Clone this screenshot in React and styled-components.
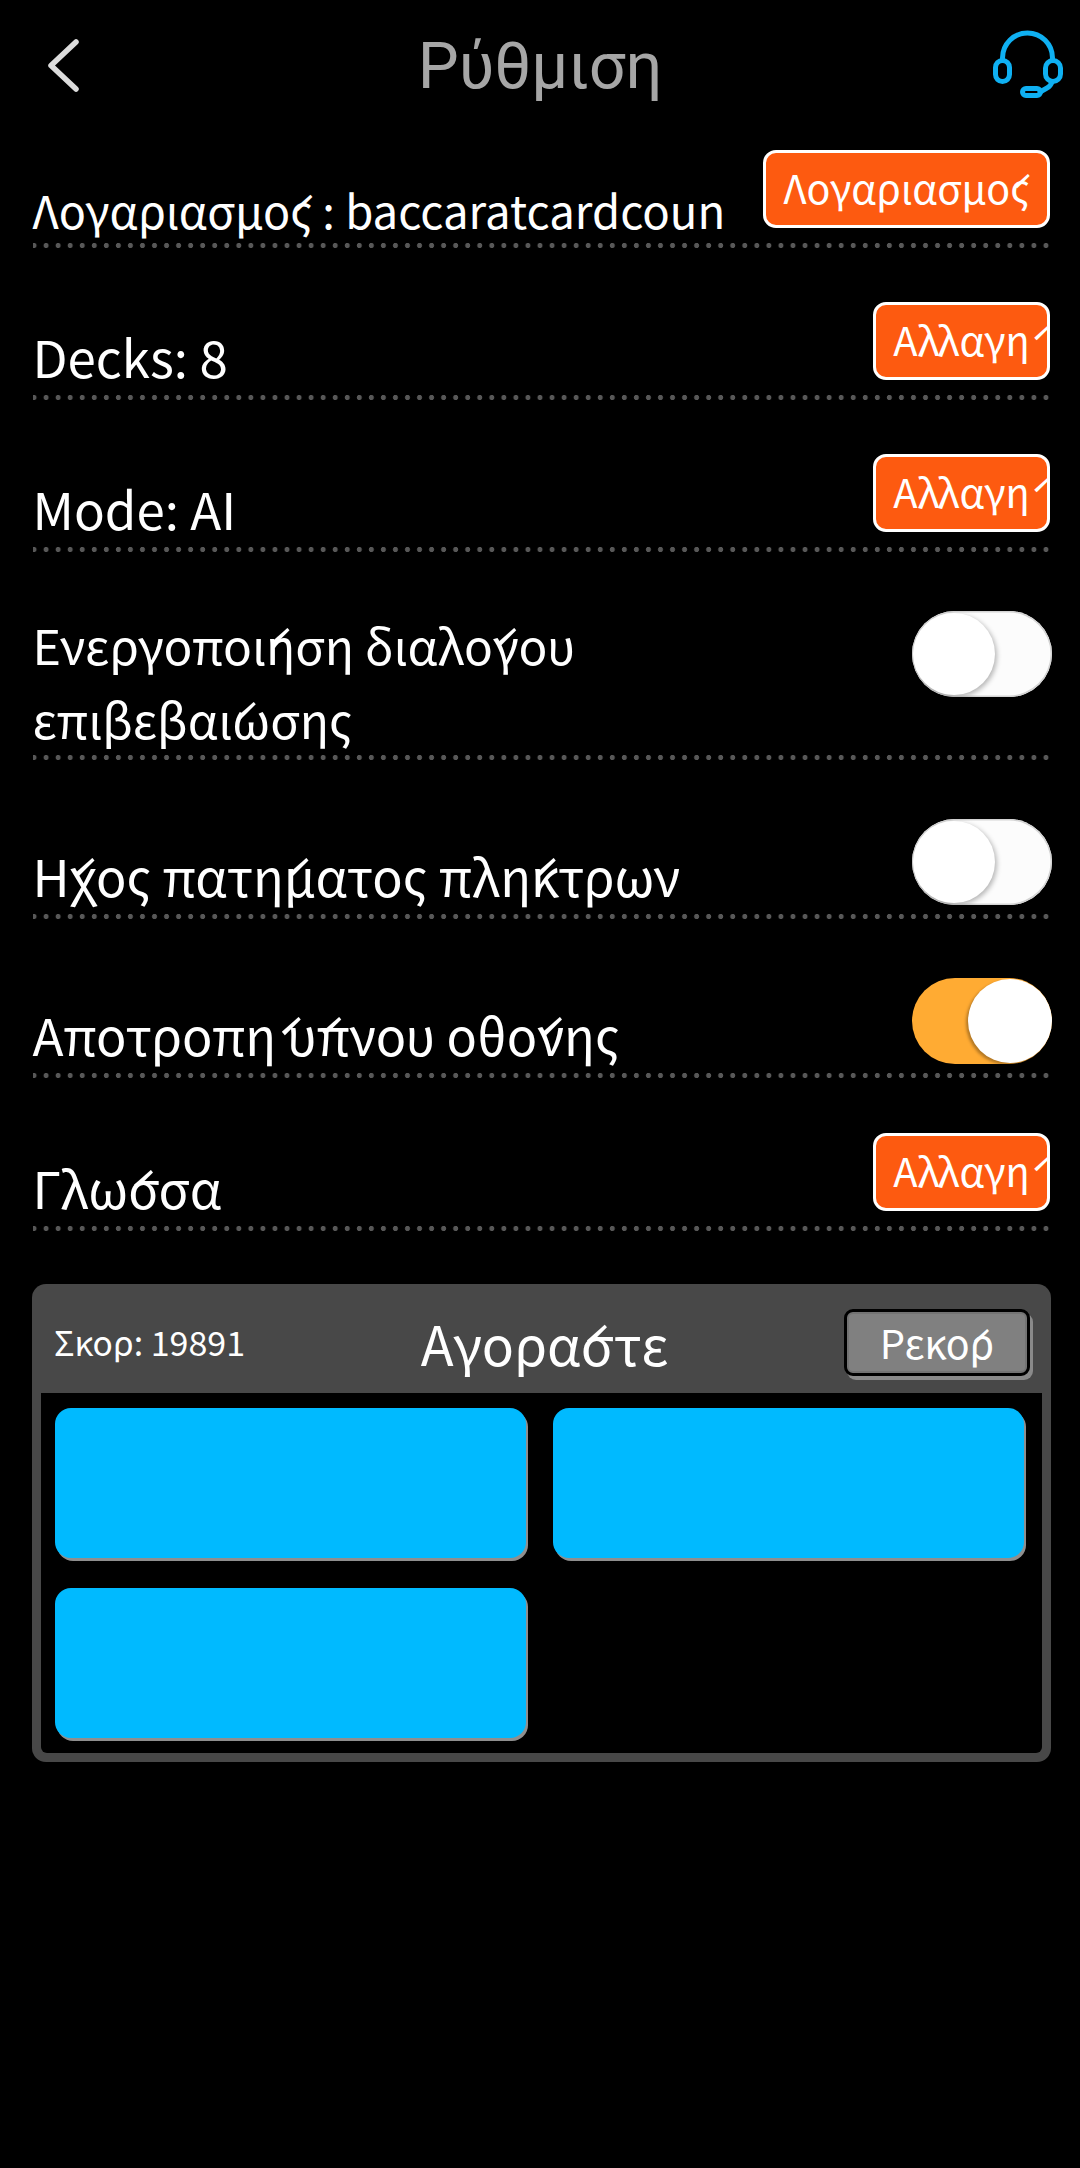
import React from 'react'
import styled, { createGlobalStyle, css } from 'styled-components'

const GlobalStyle = createGlobalStyle`
  html, body {
    margin: 0;
    background: #000;
  }
  body {
    font-family: "Noto Sans CJK SC", "Noto Sans", sans-serif;
    color: #fff;
  }
`

// accents are kept decomposed, the reference draws them apart from their letter
const rows = [
  { id: 'account', height: 151, label: 'Λογαριασμο\u0301ς : baccaratcardcoun', button: 'Λογαριασμο\u0301ς', size: 'small', wide: true },
  { id: 'decks', height: 152, label: 'Decks: 8', button: 'Αλλαγη\u0301' },
  { id: 'mode', height: 152, label: 'Mode: AI', button: 'Αλλαγη\u0301' },
  { id: 'confirm', height: 208, label: 'Ενεργοποι\u0301ηση διαλο\u0301γου επιβεβαι\u0301ωσης', toggle: 'off', size: 'tall' },
  { id: 'sound', height: 159, label: 'Η\u0301χος πατη\u0301ματος πλη\u0301κτρων', toggle: 'off' },
  { id: 'sleep', height: 159, label: 'Αποτροπη\u0301 υ\u0301πνου οθο\u0301νης', toggle: 'on' },
  { id: 'lang', height: 153, label: 'Γλω\u0301σσα', button: 'Αλλαγη\u0301' },
]

const labelSizes = { small: 45.5, tall: 48.4 }

const HeadsetIcon = () => (
  <svg width="76" height="72" viewBox="0 0 76 72" fill="none" stroke="#0fb0f2" strokeWidth="5" strokeLinecap="round" strokeLinejoin="round">
    <path d="M12.5 32v-2a25 25 0 0 1 50 0v2" />
    <rect x="5.5" y="32.5" width="14" height="21" rx="7" />
    <rect x="55.5" y="32.5" width="15" height="21" rx="7.5" />
    <path d="M62 54c-1 3-3 5-5 6l-7 4" />
    <rect x="32.5" y="60.5" width="18" height="7" rx="3.5" />
  </svg>
)

const BackIcon = () => (
  <svg width="36" height="53" viewBox="0 0 36 53" fill="none" stroke="#dcdcdc" strokeWidth="5.5" strokeLinecap="round" strokeLinejoin="round">
    <path d="M30 3L5 26.5 30 50" />
  </svg>
)

export default function App() {
  return (
    <Styles.Page>
      <GlobalStyle />
      <Styles.Header>
        <Styles.Back><BackIcon /></Styles.Back>
        <Styles.Title>Ρύθμιση</Styles.Title>
        <Styles.Help><HeadsetIcon /></Styles.Help>
      </Styles.Header>
      <Styles.List>
        {rows.map((r) => (
          <Styles.Row key={r.id} $height={r.height}>
            <Styles.Label $size={r.size}>{r.label}</Styles.Label>
            {r.button && <Styles.Action $wide={r.wide}>{r.button}</Styles.Action>}
            {r.toggle && (
              <Styles.Toggle $on={r.toggle === 'on'} $tall={r.size === 'tall'}>
                <Styles.Knob $on={r.toggle === 'on'} />
              </Styles.Toggle>
            )}
          </Styles.Row>
        ))}
      </Styles.List>
      <Styles.Shop>
        <Styles.ShopHead>
          <Styles.Score>Σκορ: 19891</Styles.Score>
          <Styles.ShopTitle>{'Αγορα\u0301στε'}</Styles.ShopTitle>
          <Styles.Record>{'Ρεκο\u0301ρ'}</Styles.Record>
        </Styles.ShopHead>
        <Styles.ShopBody>
          <Styles.Tile />
          <Styles.Tile />
          <Styles.Tile />
        </Styles.ShopBody>
      </Styles.Shop>
    </Styles.Page>
  )
}

const Styles = {
  Page: styled.main`
    width: 1080px;
    height: 2168px;
    background: #000;
    overflow: hidden;
  `,
  Header: styled.header`
    height: 97px;
    display: grid;
    grid-template-columns: 1fr auto 1fr;
    align-items: start;
    padding: 0 14px;
    box-sizing: border-box;
  `,
  Back: styled.div`
    display: flex;
    padding: 39px 0 0 32px;
  `,
  Help: styled.div`
    display: flex;
    justify-content: flex-end;
    padding-top: 28px;
  `,
  Title: styled.h1`
    margin: 0;
    padding-top: 30px;
    font-family: Roboto, sans-serif;
    font-size: 65px;
    font-weight: 400;
    line-height: 72px;
    color: #a6a6a6;
  `,
  List: styled.div`
    margin: 0 30px 0 33px;
  `,
  Row: styled.div`
    height: ${(p) => p.$height}px;
    box-sizing: border-box;
    display: flex;
    align-items: flex-end;
    justify-content: space-between;
    background: radial-gradient(circle, #585858 2.2px, transparent 2.9px) -5px bottom / 12.05px 5px repeat-x;
  `,
  Label: styled.div`
    font-size: ${(p) => labelSizes[p.$size] || 51}px;
    line-height: 74px;
    margin-left: -0.5px;
    padding-bottom: ${(p) => (p.$size === 'small' ? 2 : p.$size === 'tall' ? 5 : 7)}px;
    width: ${(p) => (p.$size === 'tall' ? '620px' : 'auto')};
    white-space: ${(p) => (p.$size === 'tall' ? 'normal' : 'nowrap')};
  `,
  Action: styled.div`
    flex: none;
    margin-bottom: 20px;
    width: ${(p) => (p.$wide ? '287px' : '177px')};
    height: 78px;
    box-sizing: border-box;
    border: 3px solid #fff;
    border-radius: 13px;
    background: #fd5a10;
    font-size: 40px;
    line-height: 68px;
    text-align: center;
    white-space: nowrap;
    overflow: hidden;
  `,
  Toggle: styled.div`
    flex: none;
    align-self: ${(p) => (p.$tall ? 'flex-start' : 'flex-end')};
    margin: ${(p) => (p.$tall ? '59px -2px 0 0' : '0 -2px 14px 0')};
    width: 140px;
    height: 86px;
    box-sizing: border-box;
    border-radius: 43px;
    display: flex;
    align-items: center;
    ${(p) =>
      p.$on
        ? css`
            background: #ffab33;
            justify-content: flex-end;
          `
        : css`
            background: #fcfcfc;
            box-shadow: inset 0 0 0 1.5px #d4d4d4;
            padding-left: 1px;
          `}
  `,
  Knob: styled.div`
    width: ${(p) => (p.$on ? 84 : 82)}px;
    height: ${(p) => (p.$on ? 84 : 82)}px;
    border-radius: 50%;
    background: #fff;
    box-shadow: ${(p) => (p.$on ? '-2px 2px 3px rgba(0, 0, 0, 0.3)' : '2px 2px 5px rgba(0, 0, 0, 0.28)')};
  `,
  Shop: styled.section`
    margin: 53px 29px 0 32px;
    height: 478px;
    box-sizing: border-box;
    background: #484848;
    border-radius: 14px;
    padding: 0 9px 9px;
    display: flex;
    flex-direction: column;
  `,
  ShopHead: styled.div`
    height: 109px;
    flex: none;
    display: grid;
    grid-template-columns: 1fr auto 1fr;
    align-items: center;
  `,
  Score: styled.div`
    font-size: 34px;
    line-height: 48px;
    margin-left: 13px;
    padding-top: 6px;
  `,
  ShopTitle: styled.div`
    font-size: 54px;
    line-height: 76px;
    padding-top: 8px;
    margin-left: 6px;
  `,
  Record: styled.div`
    justify-self: end;
    margin-right: 12px;
    margin-top: 7px;
    width: 186px;
    height: 67px;
    box-sizing: border-box;
    border: 3px solid #000;
    border-radius: 9px;
    background: #808080;
    box-shadow: 3px 4px 0 #8a8a8a, inset 0 0 0 2px #737373;
    font-size: 40px;
    line-height: 60px;
    text-align: center;
  `,
  ShopBody: styled.div`
    flex: 1;
    background: #000;
    border-radius: 0 0 6px 6px;
    padding: 15px 18px 0 14px;
    display: grid;
    grid-template-columns: 1fr 1fr;
    grid-auto-rows: 150px;
    column-gap: 27px;
    row-gap: 30px;
    align-content: start;
  `,
  Tile: styled.div`
    background: #00baff;
    border-radius: 16px;
    box-shadow: 2px 3px 0 #8f8f8f;
  `,
}
